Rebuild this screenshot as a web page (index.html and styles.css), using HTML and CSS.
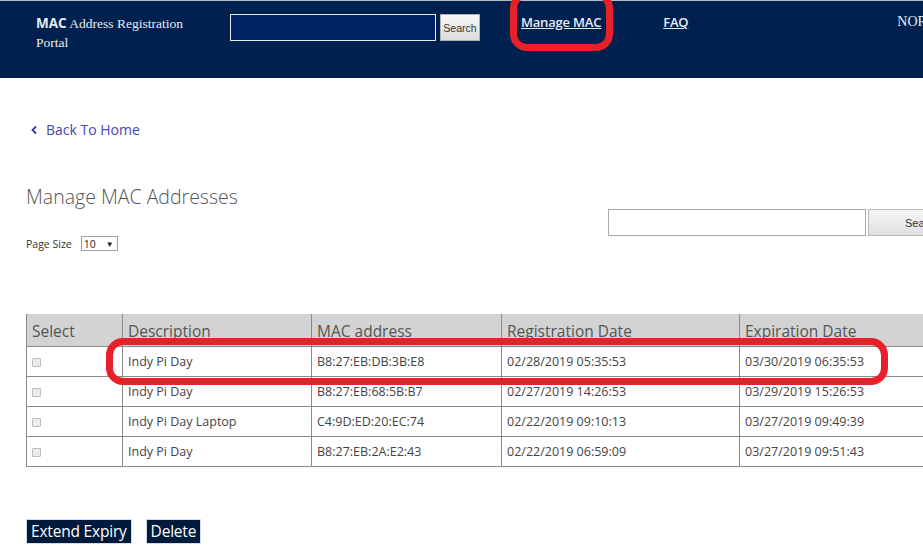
FILE: index.html
```html
<!DOCTYPE html>
<html>
<head>
<meta charset="utf-8">
<title>MAC Address Registration Portal</title>
<link rel="stylesheet" href="styles.css">
</head>
<body>
<header class="topbar">
  <div class="brand"><b>MAC</b> Address Registration<br>Portal</div>
  <form class="top-search">
    <input class="top-input" type="text">
    <button type="button" class="top-btn">Search</button>
  </form>
  <nav class="nav">
    <a class="nav-link manage" href="#">Manage MAC<span class="ring ring-nav"></span></a>
    <a class="nav-link faq" href="#">FAQ</a>
    <span class="nor">NORTH</span>
  </nav>
</header>

<main class="content">
  <a class="back" href="#"><svg class="chev" width="8" height="10" viewBox="0 0 8 10"><path d="M6 1.5 L2.5 5 L6 8.5" fill="none" stroke="#3a3aa8" stroke-width="1.8"/></svg>Back To Home</a>

  <div class="title-row">
    <div class="title-col">
      <h1 class="title">Manage MAC Addresses</h1>
      <div class="pagesize">Page Size <span class="select">10 <span class="arrow">&#9660;</span></span></div>
    </div>
    <div class="side-search">
      <input class="side-input" type="text">
      <button type="button" class="side-btn">Search</button>
    </div>
  </div>

  <div class="table-wrap">
    <table class="grid">
      <colgroup>
        <col class="c1"><col class="c2"><col class="c3"><col class="c4"><col class="c5">
      </colgroup>
      <thead>
        <tr><th>Select</th><th>Description</th><th>MAC address</th><th>Registration Date</th><th>Expiration Date</th></tr>
      </thead>
      <tbody>
        <tr><td><span class="cb"></span></td><td>Indy Pi Day</td><td>B8:27:EB:DB:3B:E8</td><td>02/28/2019 05:35:53</td><td>03/30/2019 06:35:53</td></tr>
        <tr><td><span class="cb"></span></td><td>Indy Pi Day</td><td>B8:27:EB:68:5B:B7</td><td>02/27/2019 14:26:53</td><td>03/29/2019 15:26:53</td></tr>
        <tr><td><span class="cb"></span></td><td>Indy Pi Day Laptop</td><td>C4:9D:ED:20:EC:74</td><td>02/22/2019 09:10:13</td><td>03/27/2019 09:49:39</td></tr>
        <tr><td><span class="cb"></span></td><td>Indy Pi Day</td><td>B8:27:EB:2A:E2:43</td><td>02/22/2019 06:59:09</td><td>03/27/2019 09:51:43</td></tr>
      </tbody>
    </table>
    <span class="ring ring-row"></span>
  </div>

  <div class="actions">
    <button type="button" class="act">Extend Expiry</button>
    <button type="button" class="act">Delete</button>
  </div>
</main>
</body>
</html>
```
FILE: styles.css
```css
html, body {
  margin: 0;
  padding: 0;
  overflow: hidden;
  background: #ffffff;
}
body {
  width: 1000px;
  font-family: "Open Sans", "Noto Sans", sans-serif;
}

.topbar {
  height: 77px;
  background: #00204f;
  border-top: 1px solid #b8bcc4;
  display: flex;
  align-items: flex-start;
  position: relative;
}
.brand {
  margin-left: 36px;
  margin-top: 13px;
  width: 194px;
  font-family: "Liberation Serif", "DejaVu Serif", serif;
  font-size: 13.5px;
  line-height: 19px;
  color: #e8ecf2;
}
.brand b {
  font-family: "Open Sans", sans-serif;
  font-weight: 700;
  font-size: 13.5px;
}
.top-search {
  display: flex;
  gap: 4px;
  margin: 13px 0 0 0;
}
.top-input {
  width: 206px;
  height: 27px;
  box-sizing: border-box;
  background: #002366;
  border: 1px solid #e6e9f0;
  margin: 0;
}
.top-btn {
  width: 40px;
  height: 27px;
  margin: 0;
  padding: 0;
  font-family: "Liberation Sans", Arial, sans-serif;
  font-size: 10.5px;
  color: #333;
  border: 1px solid #b0b0b0;
  background: linear-gradient(#f8f8f8, #dcdcdc);
}
.nav {
  display: flex;
  align-items: center;
  margin-top: 13px;
  height: 16px;
}
.nav-link {
  color: #e6ebf3;
  font-size: 13px;
  font-weight: 600;
  text-decoration: underline;
  position: relative;
  letter-spacing: -0.2px;
}
.manage { margin-left: 41px; }
.faq { margin-left: 62px; }
.nor {
  margin-left: 209px;
  font-family: "Liberation Serif", serif;
  font-size: 14px;
  color: #e8ecf2;
}

.ring {
  position: absolute;
  border: 7px solid #e8202a;
  border-radius: 17px;
  pointer-events: none;
}
.ring-nav {
  left: -11px;
  top: -22px;
  width: 89px;
  height: 46px;
}

.content {
  padding-left: 26px;
}
.back {
  display: inline-flex;
  align-items: center;
  margin-top: 42px;
  margin-left: 4px;
  color: #4646b4;
  text-decoration: none;
  font-size: 14px;
  line-height: 20px;
}
.chev { margin-right: 8px; }

.title-row {
  display: flex;
  justify-content: space-between;
  width: 922px;
}
.title {
  margin: 43px 0 0 0;
  font-size: 19.5px;
  font-weight: 300;
  color: #555;
  line-height: 28px;
}
.pagesize {
  margin-top: 25px;
  font-size: 10.5px;
  color: #333;
  display: flex;
  align-items: center;
  gap: 9px;
}
.select {
  display: inline-flex;
  justify-content: space-between;
  align-items: center;
  box-sizing: border-box;
  width: 37px;
  height: 15px;
  border: 1px solid #a0a0a0;
  padding: 0 3px 0 2px;
  font-size: 10.5px;
  color: #222;
}
.arrow { font-size: 8px; }
.side-search {
  display: flex;
  gap: 2px;
  margin-top: 69px;
  align-self: flex-start;
}
.side-input {
  width: 258px;
  height: 27px;
  box-sizing: border-box;
  border: 1px solid #aaa;
  margin: 0;
}
.side-btn {
  width: 80px;
  height: 27px;
  margin: 0;
  text-align: left;
  padding-left: 36px;
  font-family: "Liberation Sans", Arial, sans-serif;
  font-size: 11px;
  color: #333;
  border: 1px solid #b8b8b8;
  background: linear-gradient(#f6f6f6, #e0e0e0);
}

.table-wrap {
  position: relative;
  margin-top: 63px;
}
.grid {
  border-collapse: collapse;
  table-layout: fixed;
  width: 964px;
}
.c1 { width: 96px; }
.c2 { width: 189px; }
.c3 { width: 190px; }
.c4 { width: 238px; }
.c5 { width: 251px; }
.grid th {
  background: #d3d3d3;
  color: #555;
  font-weight: 400;
  font-size: 15.5px;
  text-align: left;
  height: 32px;
  padding: 2px 0 0 5px;
  box-sizing: border-box;
  border: 1px solid #8a8a8a;
  border-top: none;
  vertical-align: middle;
}
.grid td {
  height: 30px;
  box-sizing: border-box;
  padding: 0 0 0 5px;
  font-size: 12.5px;
  color: #444;
  border: 1px solid #8a8a8a;
  vertical-align: middle;
}
.cb {
  display: inline-block;
  width: 7px;
  height: 7px;
  border: 1px solid #bdbdbd;
  background: #ececec;
  border-radius: 1px;
  vertical-align: middle;
}
.ring-row {
  left: 80px;
  top: 24px;
  width: 768px;
  height: 33px;
  border-radius: 17px;
}

.actions {
  display: flex;
  gap: 14px;
  margin-top: 52px;
}
.act {
  background: #001a3d;
  color: #ffffff;
  font-family: "Open Sans", sans-serif;
  font-size: 15.5px;
  height: 25px;
  padding: 0 4px;
  border: 1px solid #d4dcea;
  line-height: 22px;
  letter-spacing: -0.2px;
}
```
